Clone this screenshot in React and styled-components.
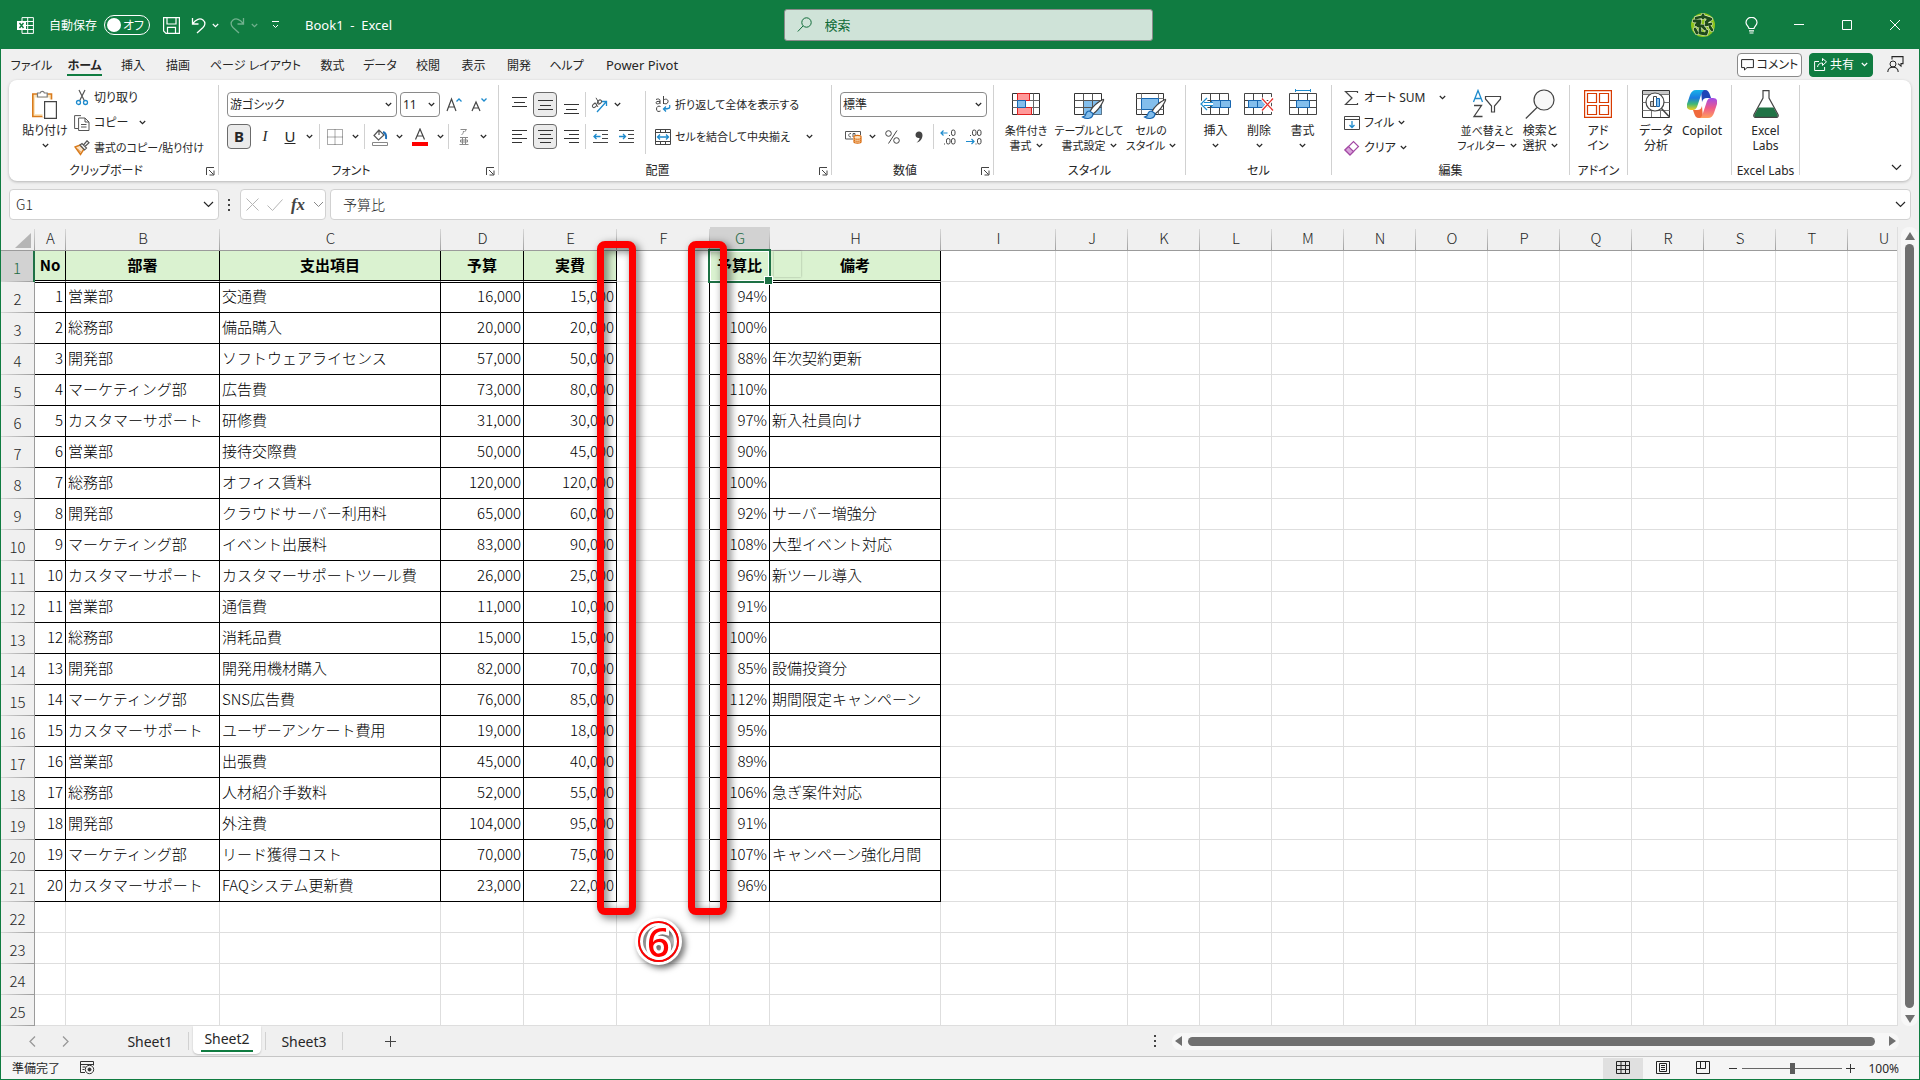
import React, { useState } from "react";
import styled, { createGlobalStyle } from "styled-components";

const GlobalStyle = createGlobalStyle`
  * {
    box-sizing: border-box;
  }
  body {
    margin: 0;
    background: #f0f0f0;
    color: #262626;
    font-family: "Noto Sans", "Noto Sans CJK JP", sans-serif;
    font-size: 12px;
    line-height: 15px;
    font-feature-settings: "palt";
  }
  button,
  input,
  select {
    font: inherit;
    font-feature-settings: inherit;
    color: inherit;
    margin: 0;
    padding: 0;
    border: 0;
    background: none;
    border-radius: 0;
    outline: none;
  }
  svg {
    display: block;
    flex: none;
  }
`;

const AppWindow = styled.div`
  min-height: 100vh;
  display: flex;
  flex-direction: column;
  border: 1px solid #107c41;
  border-top: 0;
  overflow: hidden;
`;

/* ---------- title bar ---------- */

const TitleBar = styled.header`
  height: 49px;
  padding: 1px 0 0 16px;
  display: flex;
  align-items: center;
  background: #107c41;
  color: #fff;
`;

const TitleLeft = styled.div`
  flex: 1 1 0;
  display: flex;
  align-items: center;
`;

const TitleRight = styled(TitleLeft)`
  justify-content: flex-end;
`;

const AutoSave = styled.label`
  display: flex;
  align-items: center;
  gap: 7px;
  margin: 0 11px 0 15px;
  white-space: nowrap;
`;

const Switch = styled.span`
  position: relative;
  width: 46px;
  height: 20px;
  display: flex;
  align-items: center;
  justify-content: flex-end;
  padding-right: 5px;
  border: 1px solid #fff;
  border-radius: 10px;

  input {
    appearance: none;
    position: absolute;
    left: 2px;
    width: 14px;
    height: 14px;
    border-radius: 50%;
    background: #fff;
  }
`;

const TitleButton = styled.button`
  width: ${(p) => p.$w || 20}px;
  height: 24px;
  display: flex;
  align-items: center;
  justify-content: center;
  opacity: ${(p) => (p.disabled ? 0.4 : 1)};
`;

const BookName = styled.span`
  margin-left: 13px;
  font-size: 13px;
  white-space: pre;
`;

const SearchBox = styled.label`
  width: 369px;
  height: 32px;
  padding: 0 12px;
  display: flex;
  align-items: center;
  gap: 12px;
  border: 1px solid #8a8a8a;
  border-radius: 3px;
  background: #cfe3d8;
  color: #0f6b38;

  input {
    flex: 1;
    font-size: 13px;
  }
  input::placeholder {
    color: #0f6b38;
    opacity: 1;
  }
`;

/* ---------- tabs ---------- */

const TabRow = styled.nav`
  height: 31px;
  padding: 0 15px 0 6px;
  display: flex;
  align-items: center;
`;

const RibbonTab = styled.button`
  width: ${(p) => p.$w}px;
  height: 31px;
  display: flex;
  justify-content: center;
  white-space: nowrap;
  font-size: ${(p) => (p.$latin ? 13 : 12)}px;
  font-weight: ${(p) => (p.$active ? 700 : 400)};

  span {
    height: 27px;
    padding-top: 9px;
    border-bottom: 2px solid ${(p) => (p.$active ? "#107c41" : "transparent")};
  }
`;

const TabActions = styled.div`
  margin-left: auto;
  display: flex;
  align-items: center;
  gap: 7px;
`;

const ActionButton = styled.button`
  width: ${(p) => p.$w}px;
  height: 24px;
  display: flex;
  align-items: center;
  justify-content: center;
  gap: 3px;
  white-space: nowrap;
  border: 1px solid ${(p) => (p.$primary ? "#107c41" : "#8a8a8a")};
  border-radius: 4px;
  background: ${(p) => (p.$primary ? "#107c41" : "#fff")};
  color: ${(p) => (p.$primary ? "#fff" : "#262626")};
`;

/* ---------- ribbon ---------- */

const Ribbon = styled.section`
  margin: 0 8px;
  padding: 5px 0 6px;
  display: flex;
  background: #fff;
  border-radius: 8px;
  box-shadow: 0 1px 3px rgba(0, 0, 0, 0.25);
`;

const Group = styled.div`
  width: ${(p) => p.$w}px;
  height: 90px;
  display: flex;
  flex-direction: column;
  border-right: 1px solid #d1d1d1;
`;

const GroupBody = styled.div`
  height: 78px;
  padding-left: ${(p) => p.$pad || 0}px;
  display: flex;
`;

const GroupLabel = styled.div`
  position: relative;
  height: 12px;
  padding-right: ${(p) => (p.$launcher ? 15 : 0)}px;
  line-height: 16px;
  text-align: center;
  white-space: nowrap;

  button {
    position: absolute;
    right: 3px;
    top: 4px;
  }
`;

const BigButton = styled.button`
  width: ${(p) => p.$w}px;
  padding-top: 4px;
  display: flex;
  flex-direction: column;
  align-items: center;
  justify-content: flex-start;
  white-space: nowrap;
  font-size: ${(p) => (p.$tight ? 11 : 12)}px;
`;

const BigIcon = styled.span`
  height: 34px;
  padding-bottom: 4px;
  display: flex;
  align-items: center;
`;

const Line = styled.span`
  height: 15px;
  display: flex;
  align-items: center;
  gap: 4px;
`;

const SmallColumn = styled.div`
  width: ${(p) => p.$w || 140}px;
  display: flex;
  flex-direction: column;
`;

const SmallButton = styled.button`
  height: 25px;
  display: flex;
  align-items: center;
  gap: 4px;
  white-space: nowrap;
  font-size: ${(p) => (p.$tight ? 11 : 12)}px;
`;

const Spacer = styled.span`
  width: ${(p) => p.$w}px;
`;

const ToolRows = styled.div`
  padding-top: 7px;
  display: flex;
  flex-direction: column;
  gap: 7px;
`;

const ToolRow = styled.div`
  height: 25px;
  display: flex;
  align-items: center;
  gap: ${(p) => p.$gap || 0}px;
`;

const Tool = styled.button`
  width: ${(p) => p.$w || 24}px;
  height: 25px;
  display: flex;
  align-items: center;
  justify-content: center;
  font-size: 15px;
  border: 1px solid ${(p) => (p.$on ? "#6b6b6b" : "transparent")};
  border-radius: 4px;
  background: ${(p) => (p.$on ? "#ebebeb" : "none")};

  i {
    font-family: "Liberation Serif", serif;
  }
`;

const Divider = styled.span`
  width: 1px;
  height: ${(p) => p.$h || 25}px;
  margin: ${(p) => p.$m || "0"};
  background: #d1d1d1;
`;

const SelectBox = styled.label`
  width: ${(p) => p.$w}px;
  height: 25px;
  padding: 0 4px 0 2px;
  margin-right: 3px;
  display: flex;
  align-items: center;
  border: 1px solid #8a8a8a;
  border-radius: 4px;
  background: #fff;

  select {
    flex: 1;
    min-width: 0;
    appearance: none;
  }
`;

const CollapseButton = styled.button`
  margin: auto 9px 4px auto;
`;

/* ---------- formula bar ---------- */

const FormulaBar = styled.div`
  padding: 8px 8px 7px;
  display: flex;
  align-items: center;
`;

const FieldBox = styled.div`
  height: 31px;
  width: ${(p) => (p.$w ? p.$w + "px" : "auto")};
  flex: ${(p) => (p.$w ? "none" : "1")};
  padding: 0 ${(p) => p.$pr || 4}px 0 ${(p) => p.$pad || 5}px;
  display: flex;
  align-items: center;
  justify-content: space-between;
  border: 1px solid #d1d1d1;
  border-radius: 4px;
  background: #fff;
  font-size: 14px;

  input {
    flex: 1;
    min-width: 0;
    font-family: "Noto Sans CJK JP", sans-serif;
    font-weight: 300;
    font-feature-settings: normal;
  }
`;

const FxMark = styled.span`
  font: italic bold 17px "Liberation Serif", serif;
  color: #444;
`;

/* ---------- sheet ---------- */

const Workspace = styled.main`
  position: relative;
  flex: 1;
  display: flex;
  font-family: "Noto Sans CJK JP", sans-serif;
  font-feature-settings: normal;
  font-size: 15px;
  font-weight: 300;
`;

const GridView = styled.div`
  flex: 1;
  min-width: 0;
  overflow: hidden;
  border-right: 1px solid #dedede;
`;

const Sheet = styled.table`
  width: 1px;
  table-layout: fixed;
  border-collapse: separate;
  border-spacing: 0;
  color: #000;
`;

const ColHead = styled.th`
  height: 24px;
  padding: 0 0 2px;
  line-height: 21px;
  font-weight: 300;
  border-bottom: 1px solid #9b9b9b;
  color: ${(p) => (p.$on ? "#1e6b43" : "#262626")};
  background: linear-gradient(#d8d8d8, #9b9b9b) right 2px / 1px 100% no-repeat
    ${(p) => (p.$on ? "#d2d2d2" : "#f0f0f0")};
`;

const Corner = styled(ColHead)`
  svg {
    margin-left: 14px;
    margin-top: 5px;
  }
`;

const RowHead = styled.th`
  height: 31px;
  padding: 4px 0 2px;
  line-height: 25px;
  font-weight: 300;
  text-align: center;
  color: ${(p) => (p.$on ? "#1e6b43" : "#262626")};
  border-right: ${(p) => (p.$on ? "2px solid #1e7145" : "1px solid #9b9b9b")};
  background: linear-gradient(90deg, #d8d8d8, #9b9b9b) left bottom / 100% 1px no-repeat
    ${(p) => (p.$on ? "#d2d2d2" : "#f0f0f0")};
`;

const Cell = styled.td`
  position: relative;
  height: 31px;
  padding: 0 2px 2px;
  line-height: 28px;
  white-space: nowrap;
  text-align: ${(p) => p.$align || "left"};
  font-weight: ${(p) => (p.$head ? 700 : 300)};
  background: ${(p) => (p.$head ? "#daf2d0" : "#fff")};
  border-right: 1px solid ${(p) => (p.$right ? "#000" : "#dedede")};
  border-bottom: 1px solid ${(p) => (p.$head ? "#fff" : p.$filled ? "#000" : "#dedede")};
  box-shadow: ${(p) => (p.$head ? "inset 0 -1px #000" : p.$first ? "inset 0 1px #000" : "none")};
`;

const Selection = styled.span`
  position: absolute;
  inset: -2px;
  z-index: 1;
  border: 2px solid #1e7145;
  box-shadow: inset 0 0 0 1px #fff;

  &::after {
    content: "";
    position: absolute;
    right: -4px;
    bottom: -4px;
    width: 7px;
    height: 7px;
    border: 1px solid #fff;
    background: #1e7145;
  }
`;

const PasteHint = styled.span`
  position: absolute;
  left: 4px;
  top: 0;
  width: 27px;
  height: 26px;
  background: #daf2d0;
  box-shadow: 0 0 2px rgba(0, 0, 0, 0.3);
`;

const Marker = styled.div`
  position: absolute;
  z-index: 2;
  left: ${(p) => p.$left}px;
  top: 14px;
  width: 39px;
  height: 674px;
  border: 7px solid #f00;
  border-radius: 8px;
  filter: drop-shadow(3px 3px 4px rgba(0, 0, 0, 0.6));
`;

const StepBadge = styled.div`
  position: absolute;
  z-index: 2;
  left: 637px;
  top: 694px;
  width: 41px;
  height: 41px;
  line-height: 37px;
  text-align: center;
  font-family: "Noto Sans", sans-serif;
  font-size: 40px;
  font-weight: 500;
  color: #f00;
  border: 2px solid #f00;
  border-radius: 50%;
  box-shadow: 0 0 0 3px #fff, inset 0 0 0 3px #fff;
  -webkit-text-stroke: 6px #fff;
  paint-order: stroke fill;
  filter: drop-shadow(3px 3px 3px rgba(0, 0, 0, 0.6));
`;

const VScroll = styled.div`
  width: 17px;
  margin: 0 1px 0 3px;
  padding: 5px 0 3px;
  display: flex;
  flex-direction: column;
  align-items: center;
  gap: 4px;
  border-radius: 8px;
  background: #f7f7f7;
`;

const VThumb = styled.div`
  flex: 1;
  width: 9px;
  margin-bottom: 3px;
  border-radius: 5px;
  background: #707070;
`;

/* ---------- sheet tabs & status ---------- */

const SheetBar = styled.div`
  height: 31px;
  display: flex;
  align-items: center;
  border-bottom: 1px solid #c6c6c6;
  font-size: 14px;
`;

const SheetNav = styled.div`
  width: 111px;
  padding-left: 28px;
  display: flex;
  gap: 26px;
`;

const SheetTab = styled.button`
  width: ${(p) => (p.$active ? 68 : 76)}px;
  height: ${(p) => (p.$active ? 28 : 20)}px;
  margin: ${(p) => (p.$active ? "0 4px" : "0")};
  align-self: ${(p) => (p.$active ? "flex-start" : "center")};
  line-height: 20px;
  background: ${(p) => (p.$active ? "#fff" : "none")};
  border-radius: 0 0 5px 5px;
  box-shadow: ${(p) => (p.$active ? "0 1px 2px rgba(0, 0, 0, 0.2)" : "none")};

  span {
    display: inline-block;
    padding: 1px 3px 2px;
    line-height: 19px;
    border-bottom: 2px solid ${(p) => (p.$active ? "#107c41" : "transparent")};
  }
`;

const AddSheet = styled.button`
  margin-left: 42px;
`;

const HScroll = styled.div`
  width: 727px;
  height: 17px;
  margin: 0 20px 0 12px;
  padding: 0 3px;
  display: flex;
  align-items: center;
  gap: 6px;
  border-radius: 8px;
  background: #f7f7f7;
`;

const HThumb = styled.div`
  flex: 1;
  height: 9px;
  margin-right: 8px;
  border-radius: 5px;
  background: #707070;
`;

const StatusBar = styled.footer`
  height: 22px;
  padding: 0 20px 0 11px;
  display: flex;
  align-items: center;
  background: #f5f5f5;
`;

const StatusText = styled.span`
  margin-right: 20px;
  font-size: 12px;
`;

const ViewButton = styled.button`
  width: 40px;
  height: 21px;
  display: flex;
  align-items: center;
  justify-content: center;
  background: ${(p) => (p.$on ? "#e0e0e0" : "none")};
`;

const ZoomSlider = styled.input`
  appearance: none;
  width: 100px;
  height: 12px;
  margin: 0 4px;
  background: linear-gradient(#666, #666) center / 100% 1px no-repeat;

  &::-webkit-slider-thumb {
    appearance: none;
    width: 5px;
    height: 11px;
    background: #5c5c5c;
  }
`;

const Push = styled.span`
  margin-left: auto;
`;

/* ---------- icons ---------- */

const Svg = ({ w = 16, h = 16, children, ...rest }) => (
  <svg width={w} height={h} viewBox={`0 0 ${w} ${h}`} fill="none" stroke="currentColor" aria-hidden="true" {...rest}>
    {children}
  </svg>
);

const Chevron = ({ big }) =>
  big ? (
    <Svg w={11} h={7}><path d="M1 1l4.5 4.5L10 1" strokeWidth="1.2" /></Svg>
  ) : (
    <Svg w={7} h={5}><path d="M.8 1l2.7 2.6L6.2 1" strokeWidth="1.2" /></Svg>
  );

const ExcelIcon = () => (
  <Svg w={17} h={17}>
    <path d="M5 .6h11.4v15.8H5zM5 4.5h11.4M5 8.5h11.4M5 12.5h11.4M10.7.6v15.8" />
    <path d="M0 4h9v9H0z" fill="#fff" stroke="none" />
    <path d="M2.5 6l4 5M6.5 6l-4 5" stroke="#107c41" strokeWidth="1.4" />
  </Svg>
);

const SaveIcon = () => (
  <Svg w={17} h={17}>
    <path d="M.6.6h15.8v15.8H3L.6 14zM4 .6V7h9V.6M4.5 16.4v-6h8v6" strokeWidth="1.2" />
  </Svg>
);

const UndoIcon = () => (
  <Svg w={15} h={17}>
    <path d="M1.5 1v6h6M1.5 7C5 2 9 .8 12 3c3 2.5 2 5.5 0 7.5L6 16" strokeWidth="1.3" />
  </Svg>
);

const RedoIcon = () => (
  <Svg w={15} h={17}>
    <path d="M13.5 1v6h-6M13.5 7C10 2 6 .8 3 3 0 5.5 1 8.5 3 10.5L9 16" strokeWidth="1.3" />
  </Svg>
);

const SearchIcon = () => (
  <Svg w={16} h={16}>
    <circle cx="9.5" cy="5.5" r="4.7" />
    <path d="M6 9L.8 14.5" />
  </Svg>
);

const squiggle =
  "M5 5l5-1M12 2v3M3 8h6l-4 4M14 4l6 2-5 3M17 6l-2 6 5-1M9 9l-2 4h5M4 16l2 4M9 16v4l6 1 1-3M19 14l2 3M12 14l2 2";

const Avatar = () => (
  <Svg w={24} h={24}>
    <circle cx="12" cy="12" r="12" fill="#8cc41c" stroke="none" />
    <g strokeLinecap="round" strokeLinejoin="round">
      <path d={squiggle} stroke="#e4f2c4" strokeWidth="4" />
      <path d={squiggle} stroke="#1d4a1c" strokeWidth="2.8" />
    </g>
  </Svg>
);

const BulbIcon = () => (
  <Svg w={13} h={17}>
    <path d="M4 11.5C3.8 9.5 1 8.5 1 5.5a5.3 5 0 0 1 11 0c0 3-2.8 4-3 6zM4 13.8h5M4.5 16h4" strokeWidth="1.2" />
  </Svg>
);

const PasteIcon = () => (
  <Svg w={28} h={30}>
    <path d="M1.8 5h18.7v22.5H1.8z" fill="#fbe5bd" stroke="#d97b1c" strokeWidth="1.6" />
    <path d="M4 8.5h14.5V25H4z" fill="#fff" stroke="none" />
    <path d="M6.5 8V4h2.7a2.2 2.2 0 0 1 4.2 0h2.8v4z" stroke="#7a7a7a" fill="#fff" strokeWidth="1.2" />
    <path d="M11.5 10.5h11V28h-11z" fill="#fff" stroke="none" />
    <path d="M13.6 12.6h11.8v16.8H13.6z" fill="#fff" stroke="#444" strokeWidth="1.2" />
  </Svg>
);

const CutIcon = () => (
  <Svg w={16} h={17}>
    <path d="M5 1l5.5 11M11 1L5.5 12" stroke="#555" strokeWidth="1.2" />
    <circle cx="4.5" cy="13.5" r="2" stroke="#1e8bcd" strokeWidth="1.3" />
    <circle cx="11.5" cy="13.5" r="2" stroke="#1e8bcd" strokeWidth="1.3" />
  </Svg>
);

const CopyIcon = () => (
  <Svg w={16} h={16} stroke="#555">
    <path d="M4 13.5H.6V.6H7M4.6 3H11l4 4v8.5H4.6zM11 3v4h4M7 9.5h5.5M7 12h5.5" />
  </Svg>
);

const BrushIcon = () => (
  <Svg w={16} h={16}>
    <path d="M1 7l5-2 4 4-3.5 5.5z" fill="#fce3c4" stroke="#d97b1c" strokeWidth="1.4" />
    <path d="M6 5l2-1.5L12.5 8l-2 2zM9.5 5L13 .8l2 2L11 6.5" stroke="#555" fill="#fff" strokeWidth="1.2" />
    <path d="M3 8.5l4 4" stroke="#d97b1c" />
  </Svg>
);

const LauncherIcon = () => (
  <Svg w={9} h={9} stroke="#444">
    <path d="M.5 8V.5H8M3 3l4.5 4.5M8 3.5V8H3.5" />
  </Svg>
);

const FontSizeIcon = ({ up }) => (
  <Svg w={16} h={16}>
    <path d={up ? "M1 14L5.5 2 10 14M2.5 10h6" : "M1 14l4-9 4 9M2.5 11h5"} stroke="#444" strokeWidth="1.2" />
    <path d={up ? "M10.5 4.5L13 2l2.5 2.5" : "M10.5 1.5L13 4l2.5-2.5"} stroke="#1e8bcd" strokeWidth="1.3" />
  </Svg>
);

const BordersIcon = () => (
  <Svg w={16} h={16} stroke="#555">
    <path d="M.5.5h15v15H.5zM8 .5v15M.5 8h15" strokeDasharray="1 1" />
  </Svg>
);

const BucketIcon = () => (
  <Svg w={16} h={18}>
    <path d="M7 2L2 7.500l4.500 4.500L12 7zM7 2v5" stroke="#555" strokeWidth="1.2" />
    <path d="M11 4c3 1 3.5 3.5 3 7" stroke="#1e6fb8" strokeWidth="2" />
    <path d="M.5 14.5h15v3H.5z" stroke="#888" fill="#fff" />
  </Svg>
);

const FontColorIcon = () => (
  <Svg w={16} h={18}>
    <path d="M3.500 11.500L8 1l4.500 10.500M5 8h6" stroke="#444" strokeWidth="1.2" />
    <path d="M0 14h16v4H0z" fill="#f00" stroke="none" />
  </Svg>
);

const RubyIcon = () => (
  <Svg w={10} h={17} stroke="#8a8a8a">
    <path d="M1.5 1.5h6L5.5 4M4.5 3c0 2-1 3-2 4M1 9.5h8M3.5 10v6M6.500 10v6M1.5 12h7v2h-7zM.5 16.5h9" />
  </Svg>
);

const alignLines = {
  left: "M0 .5h15M0 4.5h10M0 8.5h15M0 12.5h10",
  center: "M0 .5h15M2 4.5h11M0 8.5h15M2 12.5h11",
  right: "M0 .5h15M5 4.5h10M0 8.5h15M5 12.5h10",
};

const AlignIcon = ({ kind }) => (
  <Svg w={15} h={14} stroke="#333">
    <path d={alignLines[kind]} />
  </Svg>
);

const VAlignIcon = ({ shift }) => (
  <Svg w={15} h={18} stroke="#333">
    <path d={`M0 ${shift + 0.5}h15M2 ${shift + 5.5}h11M0 ${shift + 9.5}h15`} />
  </Svg>
);

const OrientationIcon = () => (
  <Svg w={17} h={16}>
    <ellipse cx="3.5" cy="8.500" rx="2.300" ry="1.700" transform="rotate(-45 3.5 8.5)" stroke="#555" />
    <ellipse cx="8.500" cy="5" rx="2.300" ry="1.700" transform="rotate(-45 8.5 5)" stroke="#555" />
    <path d="M4 5.500L7 10M5 .8L8.500 7" stroke="#555" />
    <path d="M6 15L15 5M11 4.500h4.500V9" stroke="#1e8bcd" strokeWidth="1.3" />
  </Svg>
);

const IndentIcon = ({ out }) => (
  <Svg w={15} h={13}>
    <path d="M0 .5h15M9 4.5h6M9 8.5h6M0 12.5h15" stroke="#444" />
    <path d={out ? "M7.5 6.5H1M3.5 4L1 6.5 3.5 9" : "M0 6.5h6.5M4 4l2.5 2.5L4 9"} stroke="#1e8bcd" strokeWidth="1.3" />
  </Svg>
);

const WrapIcon = () => (
  <Svg w={16} h={17}>
    <path d="M1 3.5c2-1 4-.5 4 1V8M5 5.500C2 5 .8 6 1 7s2 1.500 4-.5M8.500 0v8M8.500 4c3-2 5 0 4.500 2s-3 2.500-4.500 1M5.500 10.500c-2-1-4 0-4 2.500s2 3 4 2" stroke="#444" />
    <path d="M14.500 9c1 3 0 4-6 4M11 10.500L8.500 13l2.500 2.500" stroke="#1e8bcd" strokeWidth="1.3" />
  </Svg>
);

const MergeIcon = () => (
  <Svg w={16} h={16}>
    <path d="M.5.5h15v15H.5zM.5 3.5h15M.5 12.5h15M5.5.5v3M10.5.5v3M5.5 12.5v3M10.5 12.5v3" stroke="#444" />
    <path d="M2.5 8h11M5 5.5L2.5 8 5 10.5M11 5.5L13.5 8 11 10.5" stroke="#1e8bcd" strokeWidth="1.3" />
  </Svg>
);

const CurrencyIcon = () => (
  <Svg w={17} h={14}>
    <path d="M8 9H.5V1.5h15V5M6 3.500c-3-.5-3 4 0 3.500M8 7V3.500h2V5" stroke="#555" />
    <path d="M9 6.500c0-1.500 7-1.500 7 0V12c0 1.500-7 1.500-7 0z" fill="#fce3c4" stroke="#d9690a" strokeWidth="1.2" />
    <path d="M9 8.500c1 1 6 1 7 0M9 10.500c1 1 6 1 7 0" stroke="#d9690a" />
  </Svg>
);

const PercentIcon = () => (
  <Svg w={15} h={14} stroke="#444">
    <circle cx="3.5" cy="3.5" r="2.8" />
    <circle cx="11.5" cy="10.5" r="2.8" />
    <path d="M12 .5L3.5 13.5" />
  </Svg>
);

const CommaIcon = () => (
  <Svg w={8} h={12}>
    <path d="M4 .5c2 0 3.5 1.3 3.5 3.800C7.500 8 5 11 1.500 11.500 3.500 10 4.500 8.500 4.500 7 2.500 7.500.5 6 .5 4S2 .5 4 .5z" fill="#444" stroke="none" />
  </Svg>
);

const Zero = ({ x, y }) => <rect x={x} y={y} width="3.5" height="5.5" rx="1.7" stroke="#444" />;

const DecimalIcon = ({ more }) => (
  <Svg w={16} h={16}>
    {more ? (
      <path d="M7.5 4H1M3.5 1.500L1 4l2.500 2.500" stroke="#1e8bcd" strokeWidth="1.2" />
    ) : (
      <path d="M0 12.500h8M5.500 10L8 12.500 5.500 15" stroke="#1e8bcd" strokeWidth="1.2" />
    )}
    <path d={more ? "M9 6.500h1M4 15h1" : "M4 6.500h1M9.500 15h1"} stroke="#444" />
    <Zero x={11.5} y={1} />
    <Zero x={11.5} y={9.5} />
    <Zero x={6.5} y={more ? 9.5 : 1} />
  </Svg>
);

const gridLines = "M1.5 4.5h27v21h-27zM1.5 11.5h27M1.5 18.5h27M10.5 4.5v21M19.5 4.5v21";

const ConditionalIcon = () => (
  <Svg w={30} h={30}>
    <path d="M1.5 4.5h27v21h-27z" fill="#fff" stroke="#333" />
    <path d="M1.5 11.5h27M1.5 18.5h27M6.5 4.5v21M22.5 4.5v21" stroke="#666" />
    <path d="M6.5 4.5h12v7h-12zM6.5 18.5h14v7h-14z" fill="#f99" stroke="#e02020" />
    <path d="M6.5 11.5h8v7h-8z" fill="#83beec" stroke="#1766b0" />
  </Svg>
);

const PaintBrush = () => (
  <>
    <path d="M30 11.5c-6 3-11 8-13 12l3 2.5c4-3 8-8 10.5-13.5.3-.8 0-1.2-.5-1z" fill="#fff" stroke="#444" strokeWidth="1.2" />
    <path d="M16.5 23c-3 0-3.500 2-4 4-.5 1.500-2 1.500-3 2 4 2.500 10.500 2 10.500-3.500z" fill="#83beec" stroke="#1766b0" strokeWidth="1.2" />
  </>
);

const TableFormatIcon = () => (
  <Svg w={32} h={32}>
    <path d="M1.5 5.5h27v21h-27z" fill="#fff" stroke="#333" />
    <path d="M10.5 12.5h18v14h-18z" fill="#83beec" stroke="none" />
    <path d="M1.5 12.5h27M1.5 19.5h27M10.5 5.5v21M19.5 5.5v21" stroke="#555" />
    <PaintBrush />
  </Svg>
);

const CellStyleIcon = () => (
  <Svg w={32} h={32}>
    <path d="M1.5 5.5h27v21h-27z" fill="#fff" stroke="#333" />
    <path d="M1.5 10.5h27M1.5 21.5h27M6.5 5.5v21M23.5 5.5v21" stroke="#777" />
    <path d="M6.5 10.5h17v11h-17z" fill="#83beec" stroke="#1766b0" />
    <PaintBrush />
  </Svg>
);

const InsertCellIcon = () => (
  <Svg w={32} h={30}>
    <path d={gridLines} stroke="#444" fill="#fff" />
    <path d="M11.5 11.5h19v7h-19zM20.5 11.5v7" fill="#83beec" stroke="#1766b0" />
    <path d="M13 15H2M7 9l-6 6 6 6" stroke="#fff" strokeWidth="4" />
    <path d="M13 13.5H4M13 16.5H4M7 9l-6 6 6 6" stroke="#1e8bcd" strokeWidth="1.2" />
  </Svg>
);

const DeleteCellIcon = () => (
  <Svg w={32} h={30}>
    <path d={gridLines} stroke="#444" fill="#fff" />
    <path d="M5.5 11.5h14l3 3.5-3 3.5h-14zM14.5 11.5v7" fill="#83beec" stroke="#1766b0" />
    <path d="M19 9l11 13M30 9L19 22" stroke="#fff" strokeWidth="4" />
    <path d="M19 9.5l11 12M30 9.5l-11 12" stroke="#e5322d" strokeWidth="1.3" />
  </Svg>
);

const FormatCellIcon = () => (
  <Svg w={30} h={30}>
    <path d={gridLines} stroke="#444" fill="#fff" />
    <path d="M8.5 11.5h13v7h-13z" fill="#83beec" stroke="#1766b0" />
    <path d="M7.5 0v3M22.5 0v3M7.5 1.5h15" stroke="#1e8bcd" />
  </Svg>
);

const SigmaIcon = () => (
  <Svg w={16} h={16}>
    <path d="M13.5 3V1.5h-12L8 8l-6.5 6.500h12V13" stroke="#444" strokeWidth="1.2" />
  </Svg>
);

const FillIcon = () => (
  <Svg w={16} h={16}>
    <path d="M.5 1.5h15v13H.5zM.5 4.5h15" stroke="#444" />
    <path d="M8 6v6.500M5.500 10L8 12.500 10.500 10" stroke="#1e8bcd" strokeWidth="1.3" />
  </Svg>
);

const EraserIcon = () => (
  <Svg w={16} h={16}>
    <path d="M1 10l8.500-8.500 5 5L6 15z" fill="#fff" stroke="#a349a4" strokeWidth="1.2" />
    <path d="M1 10l3.500-3.500 5 5L6 15z" fill="#d9a3da" stroke="#a349a4" strokeWidth="1.2" />
  </Svg>
);

const SortIcon = () => (
  <Svg w={30} h={30}>
    <path d="M1.5 13L6 1.500 10.500 13M3 9.500h6" stroke="#1e8bcd" strokeWidth="1.3" />
    <path d="M2 16.500h7.500L2 27.500h8.500" stroke="#444" strokeWidth="1.3" />
    <path d="M13.5 7.500h15V10l-6 7v6h-3v-6l-6-7z" stroke="#444" strokeWidth="1.2" />
  </Svg>
);

const FindIcon = () => (
  <Svg w={30} h={30} stroke="#444">
    <circle cx="19" cy="11" r="10" fill="#f7f7f7" strokeWidth="1.2" />
    <path d="M12 18.500L.8 29.500" strokeWidth="1.2" />
  </Svg>
);

const AddinIcon = () => (
  <Svg w={28} h={28} stroke="#d83b01">
    <path d="M.6.6h26.8v26.8H.6zM3.5 3.5h9v9h-9zM15.5 3.5h9v9h-9zM3.5 15.5h9v9h-9zM15.5 15.5h9v9h-9z" strokeWidth="1.2" />
  </Svg>
);

const AnalysisIcon = () => (
  <Svg w={28} h={28}>
    <path d="M.5.5h27v27H.5z" fill="#fff" stroke="#333" />
    <path d="M1 1h26v3.500H1z" fill="#c8c8c8" stroke="none" />
    <path d="M.5 4.5h27M.5 12.5h27M.5 20.5h27M9.5 20v7M18.5 20v7" stroke="#777" />
    <circle cx="13" cy="12" r="9" fill="#fff" stroke="#444" strokeWidth="1.2" />
    <path d="M8.5 11.5h3v5h-3z" stroke="#555" fill="#ccc" />
    <path d="M11.5 6.5h3v10h-3z" stroke="#444" />
    <path d="M14.5 8.5h3v8h-3z" stroke="#1766b0" fill="#83beec" />
    <path d="M19.5 18.5l7.500 8" stroke="#444" strokeWidth="1.5" />
  </Svg>
);

const CopilotIcon = () => (
  <Svg w={30} h={28} stroke="none">
    <defs>
      <linearGradient id="cpBlue" x1="0" y1="0" x2="0" y2="1">
        <stop offset="0" stopColor="#18b4e8" />
        <stop offset=".4" stopColor="#1b7be0" />
        <stop offset=".7" stopColor="#3fb876" />
        <stop offset="1" stopColor="#f2cf1e" />
      </linearGradient>
      <linearGradient id="cpPink" x1="0" y1="0" x2="0" y2="1">
        <stop offset="0" stopColor="#a04ce8" />
        <stop offset=".5" stopColor="#ee5a8a" />
        <stop offset="1" stopColor="#ffa05c" />
      </linearGradient>
    </defs>
    <path d="M14 0h4c3 0 4 2 5 5l1 3h-4c-3 0-4 1-5 4z" fill="#1f45b8" />
    <path d="M16 28h-4c-3 0-4-2-5-5l-1-3h4c3 0 4-1 5-4z" fill="#f0693c" />
    <path d="M9 0h9c-2 0-3 2-4 5l-4 12c-1 2-2 3-4 3H4c-3 0-5-2-4-6L3 5c1-3 3-5 6-5z" fill="url(#cpBlue)" />
    <path d="M21 28h-9c2 0 3-2 4-5l4-12c1-2 2-3 4-3h2c3 0 5 2 4 6l-3 9c-1 3-3 5-6 5z" fill="url(#cpPink)" />
  </Svg>
);

const FlaskIcon = () => (
  <Svg w={26} h={28}>
    <path d="M5.5 17.5h15l4 7c.8 1.500 0 3-1.500 3H3c-1.500 0-2.300-1.500-1.500-3z" fill="#217346" stroke="none" />
    <path d="M10 .6h6V8l9 16.500c.6 1.500 0 2.900-1.500 2.900h-21C1 27.400.4 26 1 24.500L10 8z" stroke="#444" strokeWidth="1.2" />
  </Svg>
);

const CommentIcon = () => (
  <Svg w={13} h={12}><path d="M.6.6h11.800v8H6L3.500 11V8.600H.6z" /></Svg>
);

const ShareIcon = () => (
  <Svg w={13} h={13}>
    <path d="M5 3.500H.6v9h10V9M3.500 9c.5-3 2.500-4 5-4v2.500l4-3.700L8.500.5V3" />
  </Svg>
);

const PersonIcon = () => (
  <Svg w={17} h={17}>
    <circle cx="6" cy="8" r="3" />
    <path d="M.8 16c0-6.500 10.400-6.500 10.400 0M5 3.500V.6h11v7h-2v2.500l-3-2.500" strokeWidth="1.1" />
  </Svg>
);

const DotsIcon = () => (
  <Svg w={4} h={12} stroke="none" fill="#444"><path d="M1 0h2v2H1zM1 5h2v2H1zM1 10h2v2H1z" /></Svg>
);

/* ---------- data ---------- */

const tabs = [
  ["ファイル", 49],
  ["ホーム", 57],
  ["挿入", 40],
  ["描画", 50],
  ["ページ レイアウト", 105],
  ["数式", 49],
  ["データ", 46],
  ["校閲", 50],
  ["表示", 41],
  ["開発", 50],
  ["ヘルプ", 45],
  ["Power Pivot", 106],
];

const columns = [
  ["A", 31], ["B", 154], ["C", 221], ["D", 83], ["E", 93], ["F", 93], ["G", 60], ["H", 171], ["I", 115],
  ..."JKLMNOPQRSTU".split("").map((c) => [c, 72]),
];

const sales = "営業部";
const affairs = "総務部";
const dev = "開発部";
const marketing = "マーケティング部";
const support = "カスタマーサポート";

const expenses = [
  [sales, "交通費", "16,000", "15,000", "94%", ""],
  [affairs, "備品購入", "20,000", "20,000", "100%", ""],
  [dev, "ソフトウェアライセンス", "57,000", "50,000", "88%", "年次契約更新"],
  [marketing, "広告費", "73,000", "80,000", "110%", ""],
  [support, "研修費", "31,000", "30,000", "97%", "新入社員向け"],
  [sales, "接待交際費", "50,000", "45,000", "90%", ""],
  [affairs, "オフィス賃料", "120,000", "120,000", "100%", ""],
  [dev, "クラウドサーバー利用料", "65,000", "60,000", "92%", "サーバー増強分"],
  [marketing, "イベント出展料", "83,000", "90,000", "108%", "大型イベント対応"],
  [support, "カスタマーサポートツール費", "26,000", "25,000", "96%", "新ツール導入"],
  [sales, "通信費", "11,000", "10,000", "91%", ""],
  [affairs, "消耗品費", "15,000", "15,000", "100%", ""],
  [dev, "開発用機材購入", "82,000", "70,000", "85%", "設備投資分"],
  [marketing, "SNS広告費", "76,000", "85,000", "112%", "期間限定キャンペーン"],
  [support, "ユーザーアンケート費用", "19,000", "18,000", "95%", ""],
  [sales, "出張費", "45,000", "40,000", "89%", ""],
  [affairs, "人材紹介手数料", "52,000", "55,000", "106%", "急ぎ案件対応"],
  [dev, "外注費", "104,000", "95,000", "91%", ""],
  [marketing, "リード獲得コスト", "70,000", "75,000", "107%", "キャンペーン強化月間"],
  [support, "FAQシステム更新費", "23,000", "22,000", "96%", ""],
];

const rows = [
  ["No", "部署", "支出項目", "予算", "実費", "", "予算比", "備考"],
  ...expenses.map(([dept, item, budget, actual, ratio, note], i) => [i + 1, dept, item, budget, actual, "", ratio, note]),
  [], [], [], [],
];

const aligns = ["right", "left", "left", "right", "right", "left", "right", "left"];

/* ---------- parts ---------- */

const RibbonGroup = ({ w, pad, label, launcher, children }) => (
  <Group $w={w}>
    <GroupBody $pad={pad}>{children}</GroupBody>
    <GroupLabel $launcher={launcher}>
      {label}
      {launcher && (
        <button aria-label={`${label}の設定`}>
          <LauncherIcon />
        </button>
      )}
    </GroupLabel>
  </Group>
);

const Big = ({ w, icon, lines, chevron, tight }) => (
  <BigButton $w={w} $tight={tight}>
    <BigIcon>{icon}</BigIcon>
    {lines.map((text, i) => (
      <Line key={i}>
        {text}
        {chevron && i === lines.length - 1 && <Chevron />}
      </Line>
    ))}
  </BigButton>
);

const Drop = ({ w }) => (
  <Tool $w={w} aria-label="その他">
    <Chevron />
  </Tool>
);

const SheetRow = ({ index, values }) => {
  const head = index === 0;
  const inTable = index <= expenses.length;
  return (
    <tr>
      <RowHead $on={head} scope="row">{index + 1}</RowHead>
      {columns.map(([name], c) => {
        const filled = inTable && c < 8 && c !== 5;
        return (
          <Cell
            key={name}
            $head={head && filled}
            $first={index === 1 && filled}
            $filled={filled}
            $right={inTable && c < 8}
            $align={head ? "center" : aligns[c]}
          >
            {values[c]}
            {head && name === "G" && <Selection />}
            {head && name === "H" && <PasteHint />}
          </Cell>
        );
      })}
    </tr>
  );
};

const App = () => {
  const [autoSave, setAutoSave] = useState(false);
  const [search, setSearch] = useState("");
  const [formula, setFormula] = useState("予算比");
  const [cellRef, setCellRef] = useState("G1");
  const [zoom, setZoom] = useState(100);
  const [activeSheet, setActiveSheet] = useState("Sheet2");

  return (
    <AppWindow>
      <GlobalStyle />
      <TitleBar>
        <TitleLeft>
          <ExcelIcon />
          <AutoSave>
            自動保存
            <Switch>
              <input type="checkbox" checked={autoSave} onChange={(e) => setAutoSave(e.target.checked)} />
              オフ
            </Switch>
          </AutoSave>
          <TitleButton aria-label="保存"><SaveIcon /></TitleButton>
          <Spacer $w={10} />
          <TitleButton $w={28} aria-label="元に戻す"><UndoIcon /><Spacer $w={6} /><Chevron /></TitleButton>
          <Spacer $w={11} />
          <TitleButton $w={28} disabled aria-label="やり直し"><RedoIcon /><Spacer $w={6} /><Chevron /></TitleButton>
          <TitleButton $w={34} aria-label="クイック アクセス">
            <Svg w={7} h={8}><path d="M0 .5h7M1 4l2.500 2.500L6 4" /></Svg>
          </TitleButton>
          <BookName>Book1  -  Excel</BookName>
        </TitleLeft>
        <SearchBox>
          <SearchIcon />
          <input aria-label="検索" placeholder="検索" value={search} onChange={(e) => setSearch(e.target.value)} />
        </SearchBox>
        <TitleRight>
          <TitleButton $w={48} aria-label="アカウント"><Avatar /></TitleButton>
          <TitleButton $w={48} aria-label="ヒント"><BulbIcon /></TitleButton>
          <TitleButton $w={48} aria-label="最小化"><Svg w={10} h={10}><path d="M0 4.5h10" /></Svg></TitleButton>
          <TitleButton $w={48} aria-label="最大化"><Svg w={10} h={10}><path d="M.5.5h9v9h-9z" /></Svg></TitleButton>
          <TitleButton $w={48} aria-label="閉じる"><Svg w={10} h={10}><path d="M0 0l10 10M10 0L0 10" /></Svg></TitleButton>
        </TitleRight>
      </TitleBar>

      <TabRow>
        {tabs.map(([name, w]) => (
          <RibbonTab key={name} $w={w} $active={name === "ホーム"} $latin={name === "Power Pivot"}>
            <span>{name}</span>
          </RibbonTab>
        ))}
        <TabActions>
          <ActionButton $w={65}><CommentIcon />コメント</ActionButton>
          <ActionButton $w={64} $primary><ShareIcon />共有<Spacer $w={1} /><Chevron /></ActionButton>
          <Spacer $w={0} />
          <PersonIcon />
        </TabActions>
      </TabRow>

      <Ribbon>
        <RibbonGroup w={210} pad={9} label="クリップボード" launcher>
          <Big w={54} icon={<PasteIcon />} lines={["貼り付け", ""]} chevron />
          <Spacer $w={2} />
          <SmallColumn>
            <SmallButton><CutIcon />切り取り</SmallButton>
            <SmallButton><CopyIcon />コピー<Spacer $w={3} /><Chevron /></SmallButton>
            <SmallButton $tight><BrushIcon />書式のコピー/貼り付け</SmallButton>
          </SmallColumn>
        </RibbonGroup>

        <RibbonGroup w={280} pad={8} label="フォント" launcher>
          <ToolRows>
            <ToolRow>
              <SelectBox $w={170}>
                <select aria-label="フォント名"><option>游ゴシック</option></select>
                <Chevron />
              </SelectBox>
              <SelectBox $w={40}>
                <select aria-label="フォント サイズ"><option>11</option></select>
                <Chevron />
              </SelectBox>
              <Tool $w={22} aria-label="拡大"><FontSizeIcon up /></Tool>
              <Tool $w={28} aria-label="縮小"><FontSizeIcon /></Tool>
            </ToolRow>
            <ToolRow>
              <Tool $on><b>B</b></Tool>
              <Tool $w={28}><i>I</i></Tool>
              <Tool $w={22}><u>U</u></Tool>
              <Drop w={16} />
              <Divider $m="0 2px" />
              <Tool $w={26} aria-label="罫線"><BordersIcon /></Tool>
              <Drop w={14} />
              <Divider $m="0 2px" />
              <Tool $w={25} aria-label="塗りつぶし"><BucketIcon /></Tool>
              <Drop w={14} />
              <Tool $w={28} aria-label="フォントの色"><FontColorIcon /></Tool>
              <Drop w={12} />
              <Divider $m="0 2px" />
              <Tool $w={26} aria-label="ふりがな"><RubyIcon /></Tool>
              <Drop w={12} />
            </ToolRow>
          </ToolRows>
        </RibbonGroup>

        <RibbonGroup w={333} pad={8} label="配置" launcher>
          <ToolRows>
            <ToolRow $gap={2}>
              <Tool aria-label="上揃え"><VAlignIcon shift={1} /></Tool>
              <Tool $on aria-label="上下中央揃え"><VAlignIcon shift={4} /></Tool>
              <Tool aria-label="下揃え"><VAlignIcon shift={8} /></Tool>
              <Divider />
              <Tool $w={22} aria-label="方向"><OrientationIcon /></Tool>
              <Drop w={10} />
            </ToolRow>
            <ToolRow $gap={2}>
              <Tool aria-label="左揃え"><AlignIcon kind="left" /></Tool>
              <Tool $on aria-label="中央揃え"><AlignIcon kind="center" /></Tool>
              <Tool aria-label="右揃え"><AlignIcon kind="right" /></Tool>
              <Divider />
              <Tool aria-label="インデントを減らす"><IndentIcon out /></Tool>
              <Tool aria-label="インデントを増やす"><IndentIcon /></Tool>
            </ToolRow>
          </ToolRows>
          <Divider $h={63} $m="6px 9px 0 7px" />
          <ToolRows>
            <SmallButton $tight><WrapIcon />折り返して全体を表示する</SmallButton>
            <SmallButton $tight><MergeIcon />セルを結合して中央揃え<Spacer $w={8} /><Chevron /></SmallButton>
          </ToolRows>
        </RibbonGroup>

        <RibbonGroup w={162} pad={8} label="数値" launcher>
          <ToolRows>
            <SelectBox $w={147}>
              <select aria-label="表示形式"><option>標準</option></select>
              <Chevron />
            </SelectBox>
            <ToolRow>
              <Tool $w={26} aria-label="通貨"><CurrencyIcon /></Tool>
              <Drop w={12} />
              <Tool $w={28} aria-label="パーセント"><PercentIcon /></Tool>
              <Tool $w={26} aria-label="桁区切り"><CommaIcon /></Tool>
              <Divider $m="0 1px" />
              <Tool $w={26} aria-label="小数点以下を増やす"><DecimalIcon more /></Tool>
              <Tool $w={26} aria-label="小数点以下を減らす"><DecimalIcon /></Tool>
            </ToolRow>
          </ToolRows>
        </RibbonGroup>

        <RibbonGroup w={192} label="スタイル">
          <Big w={64} icon={<ConditionalIcon />} lines={["条件付き", "書式"]} chevron tight />
          <Big w={62} icon={<TableFormatIcon />} lines={["テーブルとして", "書式設定"]} chevron tight />
          <Big w={62} icon={<CellStyleIcon />} lines={["セルの", "スタイル"]} chevron tight />
        </RibbonGroup>

        <RibbonGroup w={146} pad={8} label="セル">
          <Big w={43} icon={<InsertCellIcon />} lines={["挿入", ""]} chevron />
          <Big w={44} icon={<DeleteCellIcon />} lines={["削除", ""]} chevron />
          <Big w={43} icon={<FormatCellIcon />} lines={["書式", ""]} chevron />
        </RibbonGroup>

        <RibbonGroup w={238} pad={12} label="編集">
          <SmallColumn $w={110}>
            <SmallButton><SigmaIcon />オート SUM<Spacer $w={6} /><Chevron /></SmallButton>
            <SmallButton><FillIcon />フィル<Chevron /></SmallButton>
            <SmallButton><EraserIcon />クリア<Chevron /></SmallButton>
          </SmallColumn>
          <Big w={66} icon={<SortIcon />} lines={["並べ替えと", "フィルター"]} chevron tight />
          <Big w={40} icon={<FindIcon />} lines={["検索と", "選択"]} chevron />
        </RibbonGroup>

        <RibbonGroup w={58} label="アドイン">
          <Big w={56} icon={<AddinIcon />} lines={["アド", "イン"]} />
        </RibbonGroup>

        <RibbonGroup w={104}>
          <Big w={56} icon={<AnalysisIcon />} lines={["データ", "分析"]} />
          <Big w={36} icon={<CopilotIcon />} lines={["Copilot"]} />
        </RibbonGroup>

        <RibbonGroup w={68} label="Excel Labs">
          <Big w={67} icon={<FlaskIcon />} lines={["Excel", "Labs"]} />
        </RibbonGroup>

        <CollapseButton aria-label="リボンを折りたたむ"><Chevron big /></CollapseButton>
      </Ribbon>

      <FormulaBar>
        <FieldBox $w={210} $pad={6}>
          <input aria-label="名前ボックス" value={cellRef} onChange={(e) => setCellRef(e.target.value)} />
          <Chevron big />
        </FieldBox>
        <Spacer $w={8} />
        <DotsIcon />
        <Spacer $w={9} />
        <FieldBox $w={86} $pr={1}>
          <Svg w={13} h={13} stroke="#b5b5b5"><path d="M.5.5l12 12M12.5.5l-12 12" /></Svg>
          <Svg w={16} h={12} stroke="#b5b5b5"><path d="M.5 6.5l5 5 10-11" /></Svg>
          <FxMark>fx</FxMark>
          <Svg w={11} h={7} stroke="#888"><path d="M1 1l4.500 4.500L10 1" /></Svg>
        </FieldBox>
        <Spacer $w={4} />
        <FieldBox $pad={12}>
          <input aria-label="数式バー" value={formula} onChange={(e) => setFormula(e.target.value)} />
          <Chevron big />
        </FieldBox>
      </FormulaBar>

      <Workspace>
        <GridView>
          <Sheet>
            <colgroup>
              <col width="34" />
              {columns.map(([name, w]) => (
                <col key={name} width={w} />
              ))}
            </colgroup>
            <thead>
              <tr>
                <Corner>
                  <Svg w={16} h={15} stroke="none"><path d="M16 0v15H0z" fill="#b5b5b5" /></Svg>
                </Corner>
                {columns.map(([name]) => (
                  <ColHead key={name} $on={name === "G"} scope="col">{name}</ColHead>
                ))}
              </tr>
            </thead>
            <tbody>
              {rows.map((values, i) => (
                <SheetRow key={i} index={i} values={values} />
              ))}
            </tbody>
          </Sheet>
        </GridView>
        <VScroll>
          <Svg w={10} h={8} stroke="none"><path d="M5 0l5 8H0z" fill="#707070" /></Svg>
          <VThumb />
          <Svg w={10} h={8} stroke="none"><path d="M5 8l5-8H0z" fill="#707070" /></Svg>
        </VScroll>
        <Marker $left={596} />
        <Marker $left={687} />
        <StepBadge>6</StepBadge>
      </Workspace>

      <SheetBar>
        <SheetNav>
          <Svg w={7} h={11} stroke="#999"><path d="M6 .5l-5 5 5 5" strokeWidth="1.3" /></Svg>
          <Svg w={7} h={11} stroke="#999"><path d="M1 .5l5 5-5 5" strokeWidth="1.3" /></Svg>
        </SheetNav>
        {["Sheet1", "Sheet2", "Sheet3"].map((name) => (
          <React.Fragment key={name}>
            <SheetTab $active={name === activeSheet} onClick={() => setActiveSheet(name)}>
              <span>{name}</span>
            </SheetTab>
            <Divider $h={18} />
          </React.Fragment>
        ))}
        <AddSheet aria-label="新しいシート"><Svg w={11} h={11} stroke="#444"><path d="M5.5 0v11M0 5.5h11" /></Svg></AddSheet>
        <Push />
        <DotsIcon />
        <Spacer $w={3} />
        <HScroll>
          <Svg w={7} h={10} stroke="none"><path d="M0 5l7-5v10z" fill="#707070" /></Svg>
          <HThumb />
          <Svg w={7} h={10} stroke="none"><path d="M7 5L0 0v10z" fill="#707070" /></Svg>
        </HScroll>
      </SheetBar>

      <StatusBar>
        <StatusText>準備完了</StatusText>
        <Svg w={15} h={14} stroke="#333">
          <path d="M5 11.5H.5V.5h13v4M.5 3.5h13M2.5 6h3M2.5 8.5h2" />
          <circle cx="9.5" cy="8.5" r="4.2" />
          <circle cx="9.5" cy="8.5" r="1.5" fill="#333" />
        </Svg>
        <Push />
        <ViewButton $on aria-label="標準"><Svg w={14} h={14} stroke="#222"><path d="M.5.5h13v12H.5zM.5 4.5h13M.5 8.5h13M5 .5v12M9.5.5v12" /></Svg></ViewButton>
        <ViewButton aria-label="ページ レイアウト"><Svg w={14} h={14} stroke="#222"><path d="M.5.5h13v12H.5zM3.5 2.5h7v8h-7zM5 4.5h4M5 6.5h4M5 8.5h4" /></Svg></ViewButton>
        <ViewButton aria-label="改ページ プレビュー"><Svg w={14} h={14} stroke="#222"><path d="M.5.5h13v12H.5zM4.5.5v7h5v-7M.5 7.5h4" /></Svg></ViewButton>
        <Spacer $w={6} />
        <Svg w={9} h={9} stroke="#333"><path d="M0 4.5h8" /></Svg>
        <ZoomSlider type="range" min="0" max="200" aria-label="ズーム" value={zoom} onChange={(e) => setZoom(e.target.value)} />
        <Svg w={9} h={9} stroke="#333"><path d="M0 4.5h9M4.5 0v9" /></Svg>
        <Spacer $w={13} />
        <span>{zoom}%</span>
      </StatusBar>
    </AppWindow>
  );
};

export default App;
